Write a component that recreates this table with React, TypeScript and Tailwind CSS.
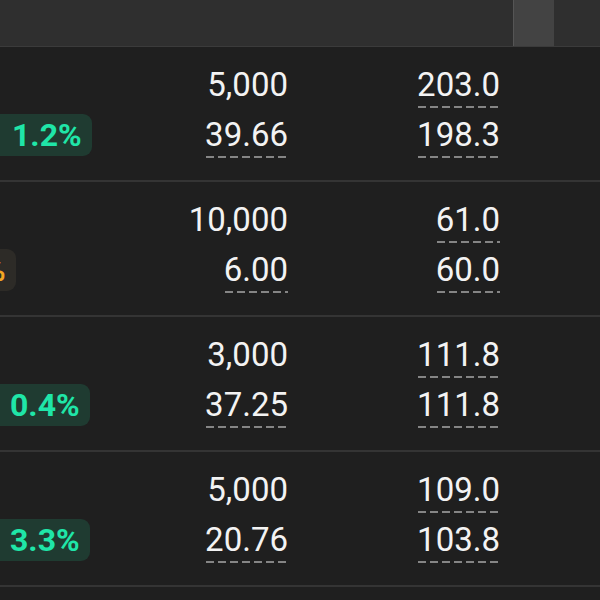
import React from "react";

type Row = {
  badge: string;
  tone: "green" | "orange";
  ml: number;
  pl: number;
  a1: string;
  a2: string;
  b1: string;
  b2: string;
};

const rows: Row[] = [
  { badge: "1.2%", tone: "green", ml: -40, pl: 52, a1: "5,000", a2: "39.66", b1: "203.0", b2: "198.3" },
  { badge: "0.0%", tone: "orange", ml: -76, pl: 12, a1: "10,000", a2: "6.00", b1: "61.0", b2: "60.0" },
  { badge: "0.4%", tone: "green", ml: -40, pl: 50, a1: "3,000", a2: "37.25", b1: "111.8", b2: "111.8" },
  { badge: "3.3%", tone: "green", ml: -40, pl: 50, a1: "5,000", a2: "20.76", b1: "109.0", b2: "103.8" },
];

const dash =
  "inline-block bg-[linear-gradient(to_right,#858585_8px,transparent_8px)] bg-[length:12px_2px] bg-repeat-x bg-[position:1px_46px]";

function Num({ v, u }: { v: string; u?: boolean }) {
  return (
    <div className="h-[50px] leading-[50px]">
      <span className={u ? dash : "inline-block"}>{v}</span>
    </div>
  );
}

export default function App() {
  return (
    <div
      className="w-[600px] h-[600px] overflow-hidden bg-[#1f1f1f] text-[#f3f3f3]"
      style={{ fontFamily: "Roboto, 'Noto Sans', sans-serif" }}
    >
      <div className="h-[47px] bg-[#2f2f2f] border-b border-[#3b3b3b] flex">
        <div className="ml-[513px] w-[41px] h-full bg-[#434343] border-l border-[#555]" />
      </div>
      {rows.map((r, i) => (
        <div key={i}>
          <div className="h-[133px] flex text-[33px] pt-[13px]">
            <div className="w-[160px] flex flex-col">
              <div className="h-[50px]" />
              <div className="h-[50px] flex items-center">
                <div
                  className={
                    "h-[42px] rounded-[9px] pr-[10px] flex items-center font-bold text-[32px] " +
                    (r.tone === "green"
                      ? "bg-[#1f3b31] text-[#1fe6a8]"
                      : "bg-[#2d2b27] text-[#f5a623]")
                  }
                  style={{ marginLeft: r.ml, paddingLeft: r.pl }}
                >
                  {r.badge}
                </div>
              </div>
            </div>
            <div className="w-[128px] text-right">
              <Num v={r.a1} />
              <Num v={r.a2} u />
            </div>
            <div className="w-[212px] text-right">
              <Num v={r.b1} u />
              <Num v={r.b2} u />
            </div>
          </div>
          <div className="h-[2px] bg-[#343434]" />
        </div>
      ))}
    </div>
  );
}
